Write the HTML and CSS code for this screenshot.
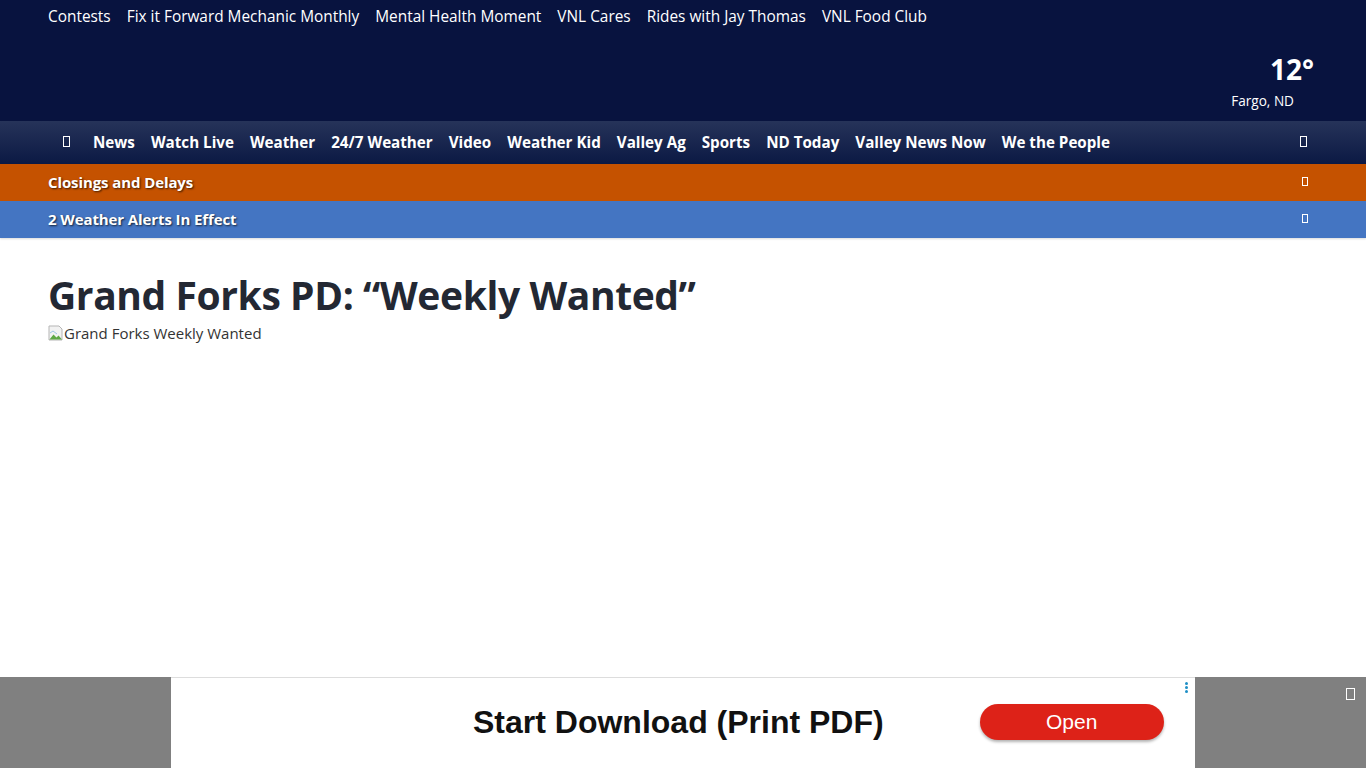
FILE: index.html
```html
<!DOCTYPE html>
<html lang="en">
<head>
    <meta charset="UTF-8">
    <meta name="viewport" content="width=device-width, initial-scale=1.0">
    <title>Grand Forks PD: “Weekly Wanted”</title>
    <link rel="stylesheet" href="styles.css">
</head>
<body>
    <header class="top">
        <nav class="top-links">
            <a href="#">Contests</a>
            <a href="#">Fix it Forward Mechanic Monthly</a>
            <a href="#">Mental Health Moment</a>
            <a href="#">VNL Cares</a>
            <a href="#">Rides with Jay Thomas</a>
            <a href="#">VNL Food Club</a>
        </nav>
        <div class="weather-now">
            <div class="temp">12°</div>
            <div class="city">Fargo, ND</div>
        </div>
    </header>

    <nav class="main-nav">
        <span class="tofu menu"></span>
        <a href="#">News</a>
        <a href="#">Watch Live</a>
        <a href="#">Weather</a>
        <a href="#">24/7 Weather</a>
        <a href="#">Video</a>
        <a href="#">Weather Kid</a>
        <a href="#">Valley Ag</a>
        <a href="#">Sports</a>
        <a href="#">ND Today</a>
        <a href="#">Valley News Now</a>
        <a href="#">We the People</a>
        <span class="tofu push"></span>
    </nav>

    <div class="alert-bar closings">
        <span>Closings and Delays</span>
        <span class="tofu small"></span>
    </div>
    <div class="alert-bar warnings">
        <span>2 Weather Alerts In Effect</span>
        <span class="tofu small"></span>
    </div>

    <main class="article">
        <h1>Grand Forks PD: “Weekly Wanted”</h1>
        <div class="broken-img">
            <svg width="16" height="16" viewBox="0 0 16 16">
                <path d="M1 1h10l3 3v11H1z" fill="#f2f2f2" stroke="#b5b5b5"/>
                <path d="M1.5 14.5l4-5 3 3 2-2 3.5 4z" fill="#5fa845"/>
                <path d="M2 8l3-2 4 3" fill="none" stroke="#9ec3e6"/>
            </svg>
            <span>Grand Forks Weekly Wanted</span>
        </div>
    </main>

    <div class="ad-dock">
        <div class="ad">
            <span class="ad-title">Start Download (Print PDF)</span>
            <button class="ad-open">Open</button>
            <span class="ad-dots"><i></i><i></i><i></i></span>
        </div>
        <span class="tofu ad-close"></span>
    </div>
</body>
</html>
```

FILE: styles.css
```css
body {
    margin: 0;
    font-family: "Open Sans", "Noto Sans", sans-serif;
    background: #fff;
    color: #212529;
}
a {
    color: #fff;
    text-decoration: none;
}
.top {
    background: #08133f;
    height: 121px;
    display: flex;
    justify-content: space-between;
    padding: 0 52px 0 48px;
}
.top-links {
    display: flex;
    gap: 16px;
    height: 32px;
    align-items: center;
    font-size: 15.4px;
}
.weather-now {
    color: #fff;
    text-align: right;
    padding-top: 50px;
}
.temp {
    font-size: 28px;
    font-weight: 700;
    line-height: 38px;
}
.city {
    font-size: 13.6px;
    line-height: 18px;
    margin-top: 4px;
    padding-right: 20px;
}
.main-nav {
    height: 43px;
    background: linear-gradient(#263359, #0b1944);
    display: flex;
    align-items: center;
    gap: 16px;
    padding: 0 59px 0 63px;
    font-size: 15.2px;
    font-weight: 700;
    line-height: 20px;
    padding-bottom: 2px;
    box-sizing: border-box;
}
.tofu {
    display: inline-block;
    width: 7px;
    height: 11px;
    border: 1px solid #fff;
    box-sizing: border-box;
}
.tofu.menu {
    margin-right: 7px;
}
.tofu.push {
    margin-left: auto;
}
.alert-bar {
    height: 37px;
    display: flex;
    align-items: center;
    justify-content: space-between;
    padding: 0 58px 0 48px;
    color: #fff;
    font-size: 15px;
    font-weight: 700;
    letter-spacing: -0.1px;
    text-shadow: 1px 1px 2px rgba(0, 0, 0, 0.7);
    box-sizing: border-box;
    padding-bottom: 2px;
}
.closings {
    background: #c55200;
}
.warnings {
    background: #4475c2;
    box-shadow: 0 1px 2px rgba(0, 0, 0, 0.15);
}
.tofu.small {
    width: 6px;
    height: 9px;
}
.article {
    padding: 33px 48px 0;
}
.article h1 {
    margin: 0;
    font-size: 39px;
    font-weight: 700;
    line-height: 48px;
    color: #232833;
    letter-spacing: -0.4px;
}
.broken-img {
    display: flex;
    align-items: center;
    font-size: 15px;
    color: #333;
    margin-top: 4px;
}
.ad-dock {
    position: fixed;
    left: 0;
    right: 0;
    bottom: 0;
    height: 91px;
    background: #808080;
    display: flex;
    justify-content: center;
}
.ad {
    position: relative;
    width: 1024px;
    background: #fff;
    border-top: 1px solid #ddd;
    display: flex;
    align-items: center;
    font-family: "Liberation Sans", Arial, sans-serif;
}
.ad-title {
    font-size: 32px;
    font-weight: 700;
    color: #111;
    margin-left: 302px;
    margin-top: -2px;
}
.ad-open {
    margin-left: 96px;
    width: 184px;
    height: 36px;
    border: none;
    border-radius: 18px;
    background: #dd2218;
    color: #fff;
    font-family: "Liberation Sans", Arial, sans-serif;
    font-size: 21px;
    box-shadow: 0 2px 3px rgba(0, 0, 0, 0.3);
    margin-top: -2px;
}
.ad-dots {
    position: absolute;
    top: 4px;
    right: 7px;
    display: flex;
    flex-direction: column;
    gap: 1px;
}
.ad-dots i {
    width: 3px;
    height: 3px;
    border-radius: 50%;
    background: #1e8fc6;
}
.ad-close {
    position: absolute;
    top: 11px;
    right: 11px;
    width: 9px;
    height: 12px;
    border-color: #fff;
}
```
